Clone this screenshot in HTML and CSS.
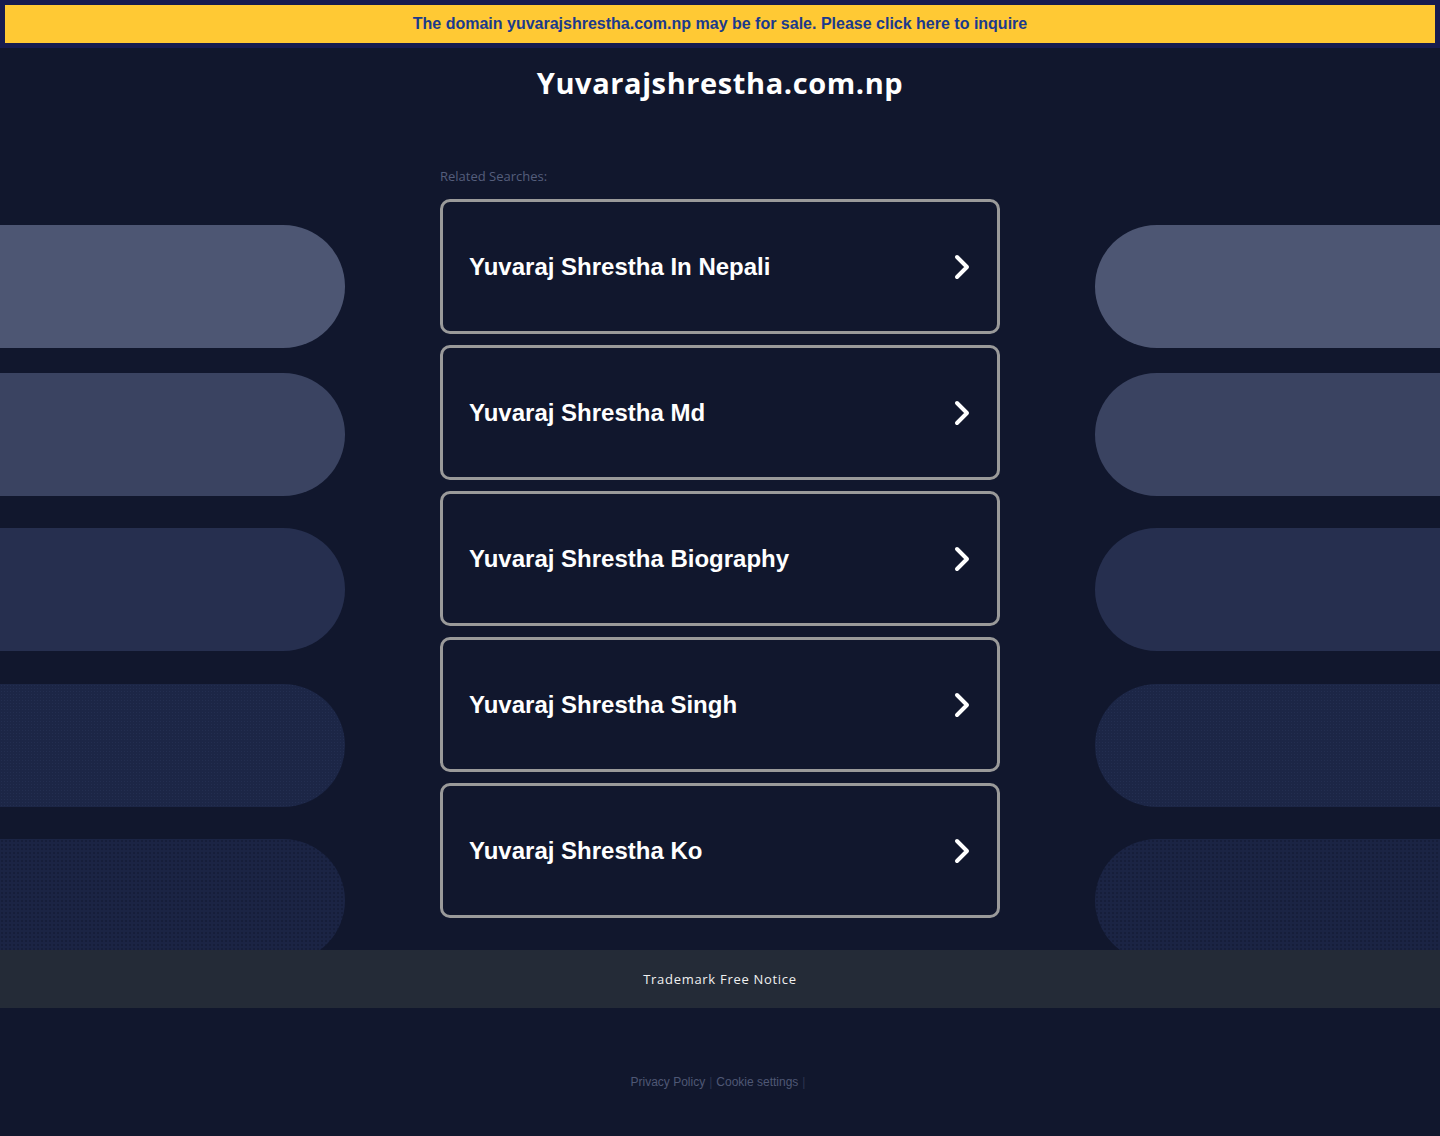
FILE: index.html
```html
<!DOCTYPE html>
<html lang="en">
<head>
<meta charset="utf-8">
<title>Yuvarajshrestha.com.np</title>
<link rel="stylesheet" href="styles.css">
</head>
<body>
<div class="banner"><a class="banner-link" href="#">The domain yuvarajshrestha.com.np may be for sale. Please click here to inquire</a></div>
<main class="stage">
  <div class="side side-left">
    <div class="pill pill-1"></div>
    <div class="pill pill-2"></div>
    <div class="pill pill-3"></div>
    <div class="pill pill-4"></div>
    <div class="pill pill-5"></div>
  </div>
  <div class="center">
    <h1 class="title">Yuvarajshrestha.com.np</h1>
    <p class="related">Related Searches:</p>
    <ul class="cards">
      <li class="card"><span class="card-text">Yuvaraj Shrestha In Nepali</span><svg class="chev" width="18" height="28" viewBox="0 0 18 28"><polyline points="4,4 14,14 4,24" fill="none" stroke="#fff" stroke-width="4" stroke-linecap="round" stroke-linejoin="round"/></svg></li>
      <li class="card"><span class="card-text">Yuvaraj Shrestha Md</span><svg class="chev" width="18" height="28" viewBox="0 0 18 28"><polyline points="4,4 14,14 4,24" fill="none" stroke="#fff" stroke-width="4" stroke-linecap="round" stroke-linejoin="round"/></svg></li>
      <li class="card"><span class="card-text">Yuvaraj Shrestha Biography</span><svg class="chev" width="18" height="28" viewBox="0 0 18 28"><polyline points="4,4 14,14 4,24" fill="none" stroke="#fff" stroke-width="4" stroke-linecap="round" stroke-linejoin="round"/></svg></li>
      <li class="card"><span class="card-text">Yuvaraj Shrestha Singh</span><svg class="chev" width="18" height="28" viewBox="0 0 18 28"><polyline points="4,4 14,14 4,24" fill="none" stroke="#fff" stroke-width="4" stroke-linecap="round" stroke-linejoin="round"/></svg></li>
      <li class="card"><span class="card-text">Yuvaraj Shrestha Ko</span><svg class="chev" width="18" height="28" viewBox="0 0 18 28"><polyline points="4,4 14,14 4,24" fill="none" stroke="#fff" stroke-width="4" stroke-linecap="round" stroke-linejoin="round"/></svg></li>
    </ul>
  </div>
  <div class="side side-right">
    <div class="pill pill-1"></div>
    <div class="pill pill-2"></div>
    <div class="pill pill-3"></div>
    <div class="pill pill-4"></div>
    <div class="pill pill-5"></div>
  </div>
</main>
<footer class="footer">
  <div class="notice">Trademark Free Notice</div>
  <div class="links"><a href="#">Privacy Policy</a><span class="sep">|</span><a href="#">Cookie settings</a><span class="sep">|</span></div>
</footer>
</body>
</html>
```
FILE: styles.css
```css
html, body {
  margin: 0;
  padding: 0;
}
body {
  background: #11172d;
  min-height: 1136px;
  font-family: "Liberation Sans", Arial, sans-serif;
}
.banner {
  border: 5px solid #171c4f;
  background: #ffc934;
  height: 38px;
  display: flex;
  align-items: center;
  justify-content: center;
}
.banner-link {
  color: #1b3a8c;
  font-weight: bold;
  font-size: 16px;
  text-decoration: none;
}
.stage {
  display: grid;
  grid-template-columns: 345px 1fr 560px 1fr 345px;
  height: 902px;
  overflow: hidden;
}
.side {
  padding-top: 177px;
  display: flex;
  flex-direction: column;
}
.side-left { grid-column: 1; }
.center { grid-column: 3; }
.side-right { grid-column: 5; }
.pill {
  height: 123px;
  flex: none;
}
.side-left .pill { border-radius: 0 62px 62px 0; }
.side-right .pill { border-radius: 62px 0 0 62px; }
.pill-1 { background: #4d5673; }
.pill-2 { background: #3a4361; margin-top: 25px; }
.pill-3 { background: #262f4f; margin-top: 32px; }
.pill-4 {
  margin-top: 33px;
  background-color: #1c2646;
  background-image: radial-gradient(circle, rgba(60, 75, 115, 0.22) 0.6px, transparent 0.9px);
  background-size: 3px 3px;
}
.pill-5 {
  margin-top: 32px;
  background-color: #1b2444;
  background-image: radial-gradient(circle, rgba(12, 17, 38, 0.35) 0.7px, transparent 1px);
  background-size: 4px 4px;
}
.title {
  margin: 0;
  padding-top: 16px;
  text-align: center;
  color: #fff;
  font-family: "Open Sans", sans-serif;
  font-weight: 700;
  font-size: 29px;
  line-height: 38px;
  letter-spacing: 0.6px;
}
.related {
  margin: 66px 0 0;
  color: #555e7c;
  font-family: "Open Sans", sans-serif;
  font-size: 13px;
  line-height: 16px;
}
.cards {
  list-style: none;
  margin: 15px 0 0;
  padding: 0;
  display: flex;
  flex-direction: column;
  gap: 11px;
}
.card {
  box-sizing: border-box;
  height: 135px;
  border: 3px solid #9a9a9a;
  border-radius: 10px;
  display: flex;
  align-items: center;
  justify-content: space-between;
  padding: 0 26px 0 26px;
}
.card-text {
  color: #fff;
  font-weight: bold;
  font-size: 24px;
}
.chev {
  display: block;
}
.footer {
  display: flex;
  flex-direction: column;
  align-items: center;
}
.notice {
  align-self: stretch;
  height: 58px;
  background: #242b37;
  color: #f0f0f0;
  font-family: "Open Sans", sans-serif;
  font-weight: 500;
  font-size: 13px;
  display: flex;
  align-items: center;
  justify-content: center;
  letter-spacing: 0.7px;
}
.links {
  margin-top: 67px;
  font-size: 12px;
  color: #4f5875;
}
.links a {
  color: #4f5875;
  text-decoration: none;
}
.sep {
  color: #2c3450;
  margin: 0 4px;
}
```
